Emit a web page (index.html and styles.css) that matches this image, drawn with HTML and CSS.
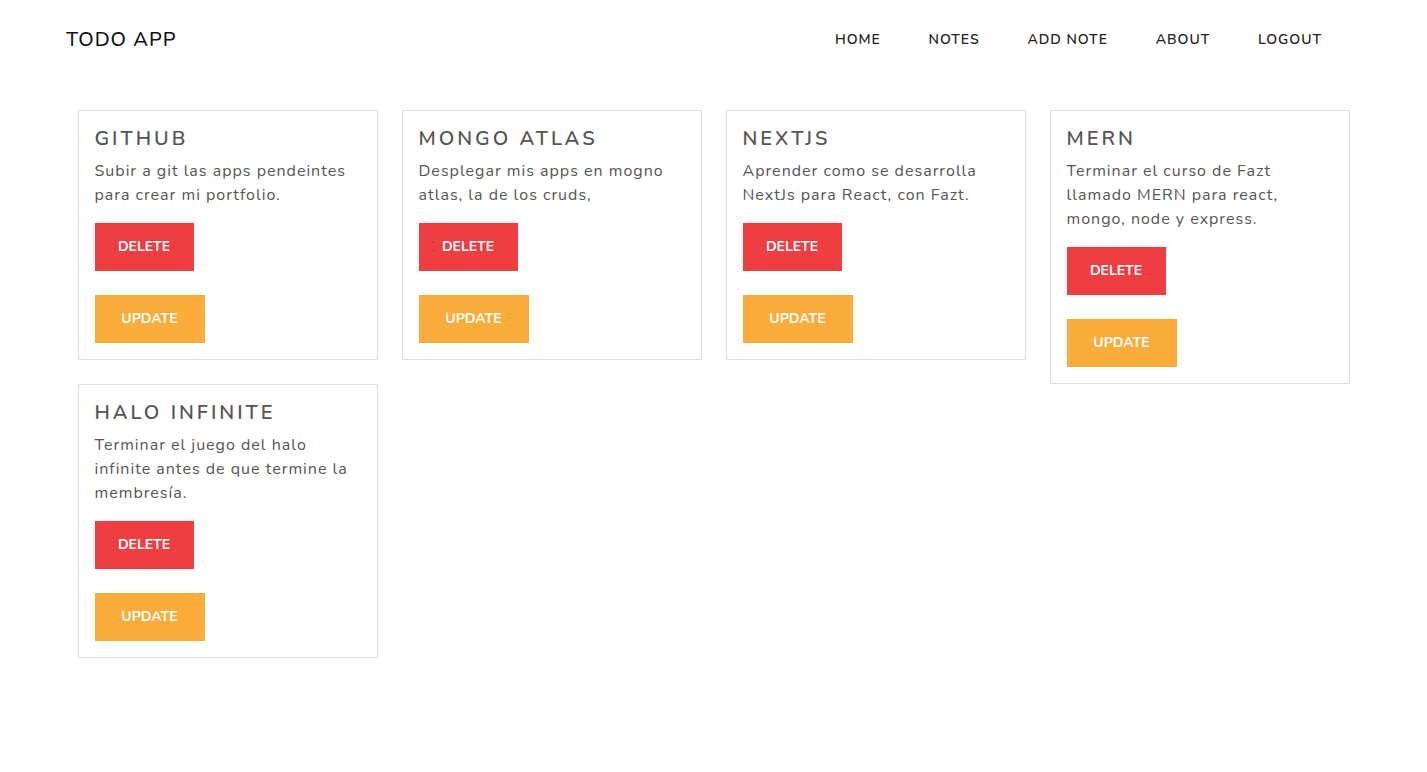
FILE: index.html
```html
<!DOCTYPE html>
<html lang="es">
<head>
<meta charset="utf-8">
<title>Todo App</title>
<link rel="stylesheet" href="styles.css">
</head>
<body>
<header class="topbar">
  <a class="brand" href="#">TODO APP</a>
  <nav class="nav">
    <a href="#">HOME</a>
    <a href="#">NOTES</a>
    <a href="#">ADD NOTE</a>
    <a href="#">ABOUT</a>
    <a href="#">LOGOUT</a>
  </nav>
</header>
<main class="notes">
  <article class="card">
    <h2 class="card-title">GITHUB</h2>
    <p class="card-text">Subir a git las apps pendeintes para crear mi portfolio.</p>
    <div class="actions"><button class="btn btn-delete">DELETE</button><button class="btn btn-update">UPDATE</button></div>
  </article>
  <article class="card">
    <h2 class="card-title">MONGO ATLAS</h2>
    <p class="card-text">Desplegar mis apps en mogno atlas, la de los cruds,</p>
    <div class="actions"><button class="btn btn-delete">DELETE</button><button class="btn btn-update">UPDATE</button></div>
  </article>
  <article class="card">
    <h2 class="card-title">NEXTJS</h2>
    <p class="card-text">Aprender como se desarrolla NextJs para React, con Fazt.</p>
    <div class="actions"><button class="btn btn-delete">DELETE</button><button class="btn btn-update">UPDATE</button></div>
  </article>
  <article class="card">
    <h2 class="card-title">MERN</h2>
    <p class="card-text">Terminar el curso de Fazt llamado MERN para react, mongo, node y express.</p>
    <div class="actions"><button class="btn btn-delete">DELETE</button><button class="btn btn-update">UPDATE</button></div>
  </article>
  <article class="card">
    <h2 class="card-title">HALO INFINITE</h2>
    <p class="card-text">Terminar el juego del halo infinite antes de que termine la membresía.</p>
    <div class="actions"><button class="btn btn-delete">DELETE</button><button class="btn btn-update">UPDATE</button></div>
  </article>
</main>
</body>
</html>
```
FILE: styles.css
```css
* { box-sizing: border-box; }
body {
  margin: 0;
  background: #fff;
  font-family: "Nunito", "Lato", "Noto Sans", sans-serif;
  color: #555;
}
.topbar {
  height: 78px;
  display: flex;
  align-items: center;
  justify-content: space-between;
  padding: 0 105px 0 66px;
}
.brand {
  font-size: 20px;
  letter-spacing: 1px;
  color: #111;
  text-decoration: none;
  font-weight: 500;
}
.nav {
  display: flex;
  gap: 47.8px;
}
.nav a {
  font-size: 14px;
  font-weight: 600;
  letter-spacing: 1px;
  color: #222;
  text-decoration: none;
}
.notes {
  width: 1272px;
  margin: 32px auto 0;
  display: grid;
  grid-template-columns: repeat(4, 300px);
  column-gap: 24px;
  row-gap: 0;
  align-items: start;
}
.card {
  border: 1px solid #ddd;
  padding: 13px 16px 16px;
}
.card-title {
  margin: 0;
  font-size: 20px;
  font-weight: 600;
  letter-spacing: 3px;
  line-height: 30px;
  color: #555;
}
.card-text {
  margin: 5px 0 16px;
  font-size: 16px;
  line-height: 24px;
  letter-spacing: 1px;
  color: #555;
}
.actions {
  display: flex;
  flex-direction: column;
  align-items: flex-start;
  gap: 24px;
}
.btn {
  border: 0;
  height: 48px;
  padding: 0 0 2px;
  font-family: inherit;
  font-size: 14px;
  font-weight: 700;
  letter-spacing: 0;
  color: #fff;
  cursor: pointer;
}
.btn-delete { background: #ee3e42; width: 99px; }
.btn-update { background: #fbad3c; width: 110px; }
```
